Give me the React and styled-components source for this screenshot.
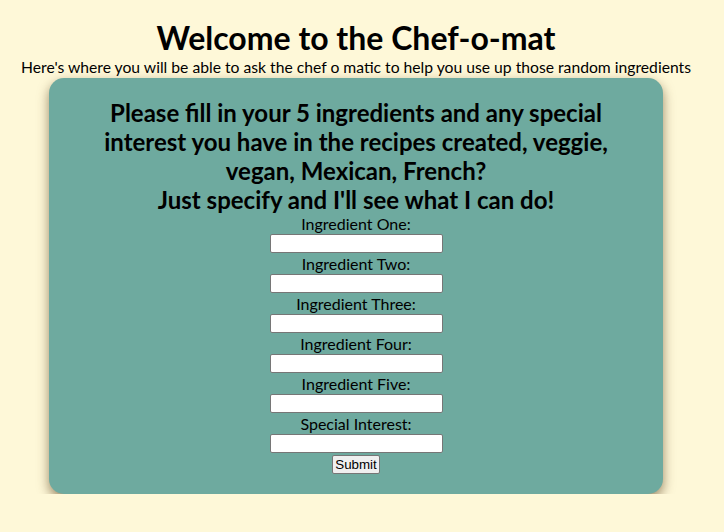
import React from 'react';
import styled, { createGlobalStyle } from 'styled-components';

const GlobalStyle = createGlobalStyle`
  html, body {
    margin: 0;
    padding: 0;
    background: #fef8d8;
    font-family: Lato, "Open Sans", sans-serif;
    color: #000;
  }
`;

const Page = styled.div`
  display: flex;
  flex-direction: column;
  align-items: center;
  padding: 19px 12px 0 0;
`;

const Title = styled.h1`
  margin: 0;
  font-size: 32px;
  line-height: 38px;
  font-weight: 700;
`;

const Subtitle = styled.p`
  margin: 0;
  font-size: 15.7px;
  line-height: 20px;
`;

const Card = styled.div`
  width: 614px;
  box-sizing: border-box;
  margin-top: 1px;
  padding: 20px 40px 20px;
  background: #6eaa9f;
  border-radius: 15px;
  box-shadow: 0 5px 12px rgba(100, 75, 40, 0.65);
  display: flex;
  flex-direction: column;
  align-items: center;
`;

const Intro = styled.h2`
  margin: 0;
  font-size: 24px;
  line-height: 29px;
  font-weight: 700;
  text-align: center;
`;

const Form = styled.form`
  display: flex;
  flex-direction: column;
  align-items: center;
`;

const Label = styled.label`
  font-size: 16px;
  line-height: 20px;
`;

const Input = styled.input`
  width: 173px;
  height: 19px;
  box-sizing: border-box;
  margin: 0 0 1px;
  border: 1px solid #767676;
  border-radius: 2px;
  background: #fff;
  padding: 1px 2px;
`;

const Submit = styled.button`
  margin-top: 1px;
  font-family: "Liberation Sans", Arial, sans-serif;
  font-size: 13.33px;
  padding: 1px 2px;
  background: #efefef;
  border: 1px solid #767676;
  border-radius: 2px;
  color: #000;
`;

const fields = [
  'Ingredient One:',
  'Ingredient Two:',
  'Ingredient Three:',
  'Ingredient Four:',
  'Ingredient Five:',
  'Special Interest:',
];

export default function App() {
  return (
    <>
      <GlobalStyle />
      <Page>
        <Title>Welcome to the Chef-o-mat</Title>
        <Subtitle>Here's where you will be able to ask the chef o matic to help you use up those random ingredients</Subtitle>
        <Card>
          <Intro>
            Please fill in your 5 ingredients and any special interest you have in the recipes created, veggie, vegan, Mexican, French?
            <br />
            Just specify and I'll see what I can do!
          </Intro>
          <Form onSubmit={e => e.preventDefault()}>
            {fields.map((f, i) => (
              <React.Fragment key={f}>
                <Label htmlFor={'f' + i}>{f}</Label>
                <Input id={'f' + i} type="text" />
              </React.Fragment>
            ))}
            <Submit type="submit">Submit</Submit>
          </Form>
        </Card>
      </Page>
    </>
  );
}
